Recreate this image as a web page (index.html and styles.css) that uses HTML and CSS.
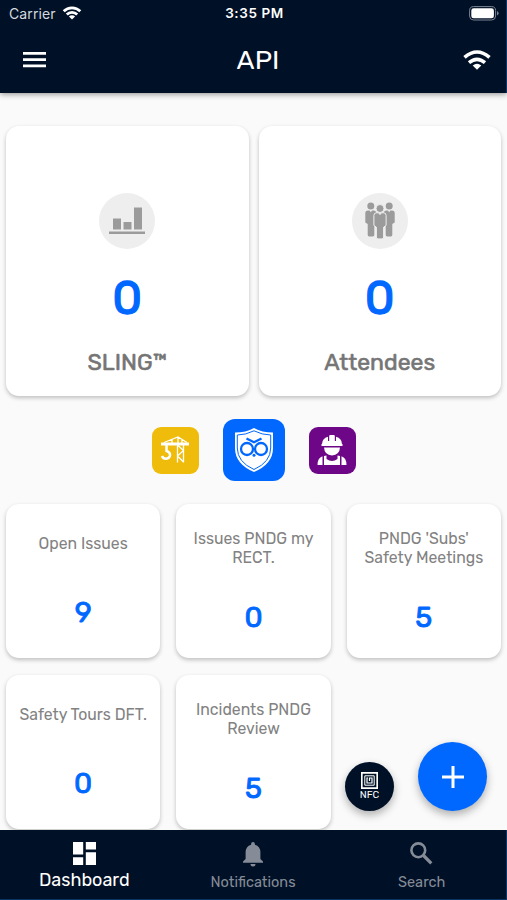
FILE: index.html
```
<!DOCTYPE html>
<html lang="en">
<head>
    <meta charset="UTF-8">
    <meta name="viewport" content="width=device-width, initial-scale=1.0">
    <title>API - Dashboard</title>
    <link rel="stylesheet" href="styles.css">
</head>
<body>
    <header>
        <div class="status-bar">
            <div class="carrier">
                <span>Carrier</span>
                <svg width="20" height="15" viewBox="0 0 20 15" fill="none" stroke="#fff" stroke-width="2.8">
                    <path d="M1.7 6.2a11.8 11.8 0 0 1 16.6 0M4.8 9.6a7.4 7.4 0 0 1 10.4 0"/>
                    <path d="M10 14.600l-3.100-3a4.300 4.300 0 0 1 6.200 0z" fill="#fff" stroke="none"/>
                </svg>
            </div>
            <span class="time">3:35 PM</span>
            <svg class="battery" width="30" height="15" viewBox="0 0 30 15">
                <rect x=".6" y=".6" width="26" height="13.4" rx="4" fill="none" stroke="#7c8594"/>
                <rect x="2.3" y="2.3" width="22.6" height="10" rx="2.4" fill="#fff"/>
                <path d="M28 5v4.6q1.6-.8 1.6-2.3T28 5z" fill="#7c8594"/>
            </svg>
        </div>
        <nav>
            <svg width="23" height="16" viewBox="0 0 23 16" fill="#fff">
                <path d="M0 0h23v2.7H0zM0 6.3h23V9H0zM0 12.6h23v2.7H0z"/>
            </svg>
            <h1>API</h1>
            <svg width="28" height="20" viewBox="0 0 28 20" fill="none" stroke="#fff" stroke-width="3.6">
                <path d="M1.500 7.300Q14-3.300 26.500 7.300M6 12.700Q14 6 22 12.700"/>
                <path d="M14 19.800l-4.300-4.300q4.300-3.300 8.600 0z" fill="#fff" stroke="none"/>
            </svg>
        </nav>
    </header>

    <main>
        <div class="summary">
            <div class="card big-card">
                <div class="circle">
                    <svg width="36" height="28" viewBox="0 0 36 28" fill="#9b9b9b">
                        <path d="M4 11.5h8v11H4zM14.5 15h8v7.500h-8zM25 .5h8v22h-8zM0 24.500h36V27H0z"/>
                    </svg>
                </div>
                <div class="big-number">0</div>
                <div class="big-label">SLING™</div>
            </div>
            <div class="card big-card">
                <div class="circle">
                    <svg width="30" height="38" viewBox="0 0 30 38" fill="#9b9b9b">
                        <g id="person">
                            <circle cx="5.800" cy="4" r="3.500"/>
                            <path d="M3 8.500h1.600l1.200 1.800L7 8.500h2q2.200 0 2.200 2.500v9.500L9.300 22v11q0 1.400-1.400 1.400H4.100q-1.400 0-1.400-1.400V22L.3 20.500V11q0-2.500 2.700-2.500z"/>
                        </g>
                        <use href="#person" transform="matrix(-1 0 0 1 30 0)"/>
                        <g stroke="#eee" stroke-width="1">
                            <circle cx="15" cy="6.500" r="4"/>
                            <path d="M11.500 10.800h2l1.500 1.800 1.500-1.800h2q2.600 0 2.600 2.600v10l-2.500 1.800V35q0 1.900-1.700 1.900h-3.800q-1.700 0-1.700-1.900v-9.800l-2.500-1.800v-10q0-2.600 2.600-2.600z"/>
                        </g>
                    </svg>
                </div>
                <div class="big-number">0</div>
                <div class="big-label">Attendees</div>
            </div>
        </div>

        <div class="modes">
            <div class="mode yellow">
                <svg width="30" height="30" viewBox="0 0 30 30" fill="none" stroke="#fff" stroke-width="1.300">
                    <path d="M1 9h28" stroke-width="3"/>
                    <path d="M4 7.500L18 2l9 5.500M12 8V4.500M18 2v6M22 4v4"/>
                    <path d="M17.500 9v18.500M23.500 9v18.500M17.500 10l6 5.500-6 5.500 6 6"/>
                    <path d="M6.500 10v6q4 1.500 3.500 4.500a4.200 4.200 0 0 1-8 .5" stroke-width="2.500"/>
                </svg>
            </div>
            <div class="mode blue">
                <svg width="40" height="46" viewBox="0 0 40 46">
                    <path d="M20 1Q28 5.500 39 5.500V21q0 16-19 24Q1 37 1 21V5.500Q12 5.500 20 1z" fill="#fff"/>
                    <path d="M20 3.800Q28 7.900 36.700 8V21q0 14-16.700 21.500Q3.300 35 3.300 21V8Q12 7.900 20 3.800z" fill="none" stroke="#0068ff"/>
                    <g fill="none" stroke="#0068ff" stroke-width="2.300">
                        <circle cx="13" cy="22" r="6"/>
                        <circle cx="27" cy="22" r="6"/>
                        <path d="M12.500 11.500L20 15.300l7.500-3.800"/>
                    </g>
                    <circle cx="20" cy="28.300" r="1.500" fill="#0068ff"/>
                </svg>
            </div>
            <div class="mode purple">
                <svg width="30" height="30" viewBox="0 0 30 30" fill="#fff">
                    <path d="M5 9q0-5.500 6-7.200V6h1.200V1q0-1 1-1h3.600q1 0 1 1v5H19V1.800Q25 3.500 25 9h.500v2h-21V9z"/>
                    <path d="M7 12.500h16q-.5 7.500-8 8-7.500-.500-8-8z"/>
                    <path d="M.5 30q0-7 5-8.700V30zM7 21l2.500-.500V24q5.500 4 11 0v-3.500l2.500.500v9H7zM24.500 21.300q5 1.700 5 8.700h-5z"/>
                </svg>
            </div>
        </div>

        <div class="tiles">
            <div class="card tile">
                <p>Open Issues</p>
                <span>9</span>
            </div>
            <div class="card tile">
                <p>Issues PNDG my<br>RECT.</p>
                <span>0</span>
            </div>
            <div class="card tile">
                <p>PNDG 'Subs'<br>Safety Meetings</p>
                <span>5</span>
            </div>
            <div class="card tile">
                <p>Safety Tours DFT.</p>
                <span>0</span>
            </div>
            <div class="card tile">
                <p>Incidents PNDG<br>Review</p>
                <span>5</span>
            </div>
        </div>

        <!-- floating buttons -->
        <div class="fabs">
            <div class="fab nfc">
                <svg width="17" height="17" viewBox="0 0 17 17" fill="none" stroke="#fff" stroke-width="1.700">
                    <path d="M.8.8h15.400v15.400H.8z"/>
                    <path d="M3.800 3.800h9.400v9.400H3.800z" stroke-width="1"/>
                    <path d="M7 6H6v5h5V6H8.500v3" stroke-width="1.200"/>
                </svg>
                <span>NFC</span>
            </div>
            <div class="fab add">
                <svg width="22" height="22" viewBox="0 0 22 22" fill="#fff">
                    <path d="M9.500 0h3v9.500H22v3h-9.500V22h-3v-9.500H0v-3h9.500z"/>
                </svg>
            </div>
        </div>
    </main>

    <footer>
        <div class="tab active">
            <svg width="23" height="23" viewBox="0 0 23 23" fill="#fff">
                <path d="M0 0h10.200v12.600H0zM12.800 0H23v7.600H12.800zM0 15.200h10.200V23H0zM12.800 10.200H23V23H12.800z"/>
            </svg>
            <span>Dashboard</span>
        </div>
        <div class="tab">
            <svg width="20" height="25" viewBox="0 0 20 25" fill="#858c98">
                <path d="M10 0q1.900 0 1.900 1.900v.8Q17.400 4 17.400 10.600v6.300L20 19.500v1.300H0v-1.300l2.600-2.600v-6.300Q2.600 4 8.100 2.700v-.8Q8.100 0 10 0zM7.500 22h5q0 2.500-2.500 2.500T7.500 22z"/>
            </svg>
            <span>Notifications</span>
        </div>
        <div class="tab">
            <svg width="23" height="23" viewBox="0 0 23 23" fill="none" stroke="#858c98">
                <circle cx="8.300" cy="8.300" r="6.900" stroke-width="2.600"/>
                <path d="M13.500 13.500l7.800 7.800" stroke-width="3.200"/>
            </svg>
            <span>Search</span>
        </div>
    </footer>
</body>
</html>
```

FILE: styles.css
```
body {
    font-family: Rubik, Roboto, sans-serif;
    display: flex;
    flex-direction: column;
    height: 100vh;
    margin: 0;
    background-color: #fafafa;
    overflow: hidden;
}

svg {
    display: block;
    flex-shrink: 0;
}

header {
    height: 93px;
    box-sizing: border-box;
    background-color: #001026;
    border-right: 1px solid #0b3564;
    color: white;
    box-shadow: 0 1px 6px rgba(0, 0, 0, 0.45);
    flex-shrink: 0;
    position: relative;
    z-index: 1;
}

.status-bar {
    display: grid;
    grid-template-columns: 1fr auto 1fr;
    align-items: center;
    height: 26px;
    padding: 0 7px 0 9px;
    font-family: Inter, sans-serif;
}
.carrier {
    display: flex;
    align-items: center;
    gap: 6px;
    font-size: 14px;
    letter-spacing: 0.1px;
    color: #d5d9df;
}
.carrier svg {
    margin-top: -2px;
}
.time {
    font-size: 13.5px;
    font-weight: 600;
    letter-spacing: 0.6px;
    margin-right: -1px;
}
.battery {
    justify-self: end;
}

nav {
    display: flex;
    justify-content: space-between;
    align-items: center;
    height: 67px;
    padding: 0 15px 0 23px;
}
h1 {
    margin: 0 0 0 7px;
    font-size: 27px;
    font-weight: 400;
}

main {
    flex: 1;
    min-height: 0;
    padding: 33px 6px 0 6px;
    position: relative;
    overflow: hidden;
}

.card {
    background-color: white;
    border-radius: 13px;
    box-shadow: 0 2px 4px rgba(0, 0, 0, 0.24);
    display: flex;
    flex-direction: column;
    align-items: center;
}

.summary {
    display: grid;
    grid-template-columns: 1fr 1fr;
    gap: 10px;
}
.big-card {
    height: 270px;
    box-sizing: border-box;
    padding-top: 67px;
}
.circle {
    width: 56px;
    height: 56px;
    border-radius: 50%;
    background-color: #eee;
    display: flex;
    align-items: center;
    justify-content: center;
}
.big-number {
    margin-top: 19px;
    font-size: 47px;
    line-height: 60px;
    color: #0068ff;
    -webkit-text-stroke: 1.3px #0068ff;
}
.big-label {
    margin-top: 19px;
    font-size: 23px;
    line-height: 30px;
    color: #757575;
    -webkit-text-stroke: 0.6px #757575;
}

.modes {
    display: flex;
    justify-content: center;
    align-items: center;
    gap: 24px;
    height: 62px;
    margin: 23px 0;
}
.mode {
    width: 47px;
    height: 47px;
    border-radius: 9px;
    display: flex;
    align-items: center;
    justify-content: center;
}
.yellow {
    background-color: #efbc0b;
}
.blue {
    width: 62px;
    height: 62px;
    border-radius: 12px;
    background-color: #0068ff;
}
.purple {
    background-color: #6d0787;
}

.tiles {
    display: grid;
    grid-template-columns: repeat(3, 1fr);
    gap: 17px 16px;
}
.tile {
    height: 154px;
    box-sizing: border-box;
    padding: 9px 0 7px;
    justify-content: space-around;
}
.tile p {
    margin: 0;
    font-size: 15.8px;
    line-height: 19px;
    text-align: center;
    color: #828282;
}
.tile span {
    font-size: 28.5px;
    line-height: 35px;
    color: #0068ff;
    -webkit-text-stroke: 0.9px #0068ff;
}

.fabs {
    position: absolute;
    right: 20px;
    bottom: 19px;
    display: flex;
    align-items: flex-end;
    gap: 24px;
}
.fab {
    border-radius: 50%;
    display: flex;
    flex-direction: column;
    align-items: center;
    justify-content: center;
    box-shadow: 0 4px 8px rgba(0, 0, 0, 0.3);
}
.nfc {
    width: 49px;
    height: 49px;
    background-color: #001026;
    color: white;
    font-size: 10px;
    line-height: 12px;
}
.add {
    width: 69px;
    height: 69px;
    background-color: #0068ff;
}

footer {
    height: 70px;
    box-sizing: border-box;
    flex-shrink: 0;
    background-color: #001026;
    border-right: 1px solid #0b3564;
    border-bottom: 1px solid #0b3564;
    display: grid;
    grid-template-columns: repeat(3, 1fr);
}
.tab {
    display: flex;
    flex-direction: column;
    align-items: center;
    padding-top: 12px;
    color: #858c98;
    font-size: 14.5px;
    line-height: 20px;
}
.tab span {
    margin-top: auto;
    margin-bottom: 7px;
}
.active {
    color: white;
    font-size: 18px;
}
.active span {
    margin-bottom: 9px;
}
```
